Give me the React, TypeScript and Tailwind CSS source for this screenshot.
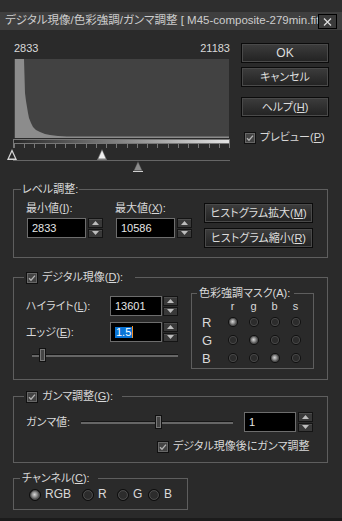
import React from "react";

function Check() {
  return (
    <span className="inline-flex w-[12px] h-[12px] shrink-0 items-center justify-center border border-[#111] bg-[#434343] shadow-[inset_0_0_0_1px_#676767]">
      <svg width="8" height="8" viewBox="0 0 8 8">
        <path d="M1 4.2 L3 6.2 L7 1.6" stroke="#b4b4b4" strokeWidth="1.3" fill="none" />
      </svg>
    </span>
  );
}

function Radio({ on, size = 12 }: { on?: boolean; size?: number }) {
  return (
    <svg width={size} height={size} viewBox="0 0 12 12" className="shrink-0 block">
      <defs>
        <radialGradient id="rdOn" cx="0.45" cy="0.45" r="0.6">
          <stop offset="0" stopColor="#d8d8d8" />
          <stop offset="0.5" stopColor="#8a8a8a" />
          <stop offset="1" stopColor="#3a3a3a" />
        </radialGradient>
      </defs>
      <circle cx="6" cy="6" r="5.5" fill="#262626" stroke="#0e0e0e" />
      <circle cx="6" cy="6" r="4.4" fill={on ? "url(#rdOn)" : "#2c2c2c"} stroke="#555" strokeWidth="0.8" />
    </svg>
  );
}

function Spin({ className = "" }: { className?: string }) {
  return (
    <div className={"flex flex-col w-[15px] h-[20px] gap-[1px] " + className}>
      <div className="flex-1 flex items-center justify-center border border-[#141414] bg-[#393939] shadow-[inset_0_1px_0_#4c4c4c]">
        <svg width="7" height="4" viewBox="0 0 7 4">
          <path d="M0 4 L3.5 0 L7 4Z" fill="#bdbdbd" />
        </svg>
      </div>
      <div className="flex-1 flex items-center justify-center border border-[#141414] bg-[#393939] shadow-[inset_0_1px_0_#4c4c4c]">
        <svg width="7" height="4" viewBox="0 0 7 4">
          <path d="M0 0 L3.5 4 L7 0Z" fill="#bdbdbd" />
        </svg>
      </div>
    </div>
  );
}

function Input({ className = "", children }: { className?: string; children?: React.ReactNode }) {
  return (
    <div
      className={
        "h-[20px] bg-black border border-[#6d6d6d] flex items-center pl-[4px] text-[11px] text-[#e6e6e6] " +
        className
      }
    >
      {children}
    </div>
  );
}

function Btn({ className = "", children }: { className?: string; children: React.ReactNode }) {
  return (
    <div
      className={
        "flex items-center justify-center whitespace-nowrap border border-[#0b0b0b] bg-linear-to-b from-[#3d3d3d] to-[#222] shadow-[inset_0_0_0_1px_#4a4a4a] text-[#dedede] " +
        className
      }
    >
      {children}
    </div>
  );
}

function Slider({ left, right, className = "" }: { left: number; right: number; className?: string }) {
  return (
    <div className={"flex items-center h-[14px] " + className}>
      <div className="h-[3px] border-t border-[#161616] bg-[#666]" style={{ width: left }} />
      <div className="w-[7px] h-[14px] border border-[#111] bg-[#444] shadow-[inset_0_0_0_1px_#777]" />
      <div className="h-[3px] border-t border-[#161616] bg-[#666]" style={{ width: right }} />
    </div>
  );
}

function Histogram() {
  const ticks = Array.from({ length: 22 }, (_, i) => Math.round(7 + i * 10.24) + 0.5);
  return (
    <svg width="225" height="116" viewBox="0 0 225 116" className="block mt-[2px]">
      <defs>
        <linearGradient id="hg" x1="0" x2="1" y1="0" y2="0">
          <stop offset="0" stopColor="#262626" />
          <stop offset="1" stopColor="#e4e4e4" />
        </linearGradient>
      </defs>
      <rect x="7" y="2" width="215" height="79" fill="#424242" />
      <polygon
        points="8,81 8,2 17,2 18,36 19,44 20,50 21,56 22,61 24,66 26,70 29,73 33,75 38,77 43,78 51,79 60,79.5 222,79.5 222,81"
        fill="#8c8c8c"
      />
      <rect x="6.5" y="82.5" width="216" height="4" fill="url(#hg)" stroke="#777" />
      <line x1="6.5" y1="82" x2="6.5" y2="91" stroke="#777" />
      <line x1="222.5" y1="82" x2="222.5" y2="91" stroke="#777" />
      {ticks.map((x) => (
        <line key={x} x1={x} y1="87" x2={x} y2="91" stroke="#777" />
      ))}
      <line x1="6" y1="103.5" x2="223" y2="103.5" stroke="#666" />
      <polygon points="5,92 0,103 10,103" fill="#d6d6d6" />
      <polygon points="5,95 2,101.5 8,101.5" fill="#2a2a2a" />
      <polygon points="95,92 90,103 100,103" fill="#7a7a7a" />
      <polygon points="95,93.5 91.5,101.5 98.5,101.5" fill="#efefef" />
      <polygon points="131,104 126,115 136,115" fill="#555" />
      <polygon points="131,105.5 127.5,113 134.5,113" fill="#8c8c8c" />
      <line x1="126" y1="114.5" x2="136" y2="114.5" stroke="#cfcfcf" />
    </svg>
  );
}

export default function App() {
  const dot = (on: boolean) => (
    <div className="flex items-center justify-center">
      <Radio on={on} size={10} />
    </div>
  );
  return (
    <div className="w-[342px] h-[521px] overflow-hidden bg-[#2a2a2a] text-[#d9d9d9] text-[11px] leading-[13px] font-['Liberation_Sans','Noto_Sans_CJK_JP',sans-serif] [font-feature-settings:'palt'] flex flex-col">
      <div className="h-[12px] bg-[#2e2e2e] shrink-0" />
      <div className="h-[18px] bg-[#3f3f3f] flex items-start shrink-0">
        <div className="flex-1 overflow-hidden whitespace-nowrap pl-[5px] pt-[1px] text-[11.5px] leading-[14px] text-[#cdcdcd]">
          デジタル現像/色彩強調/ガンマ調整 [ M45-composite-279min.fits ]
        </div>
        <div className="mt-[2px] mr-[5px] w-[19px] h-[15px] border border-black bg-[#3a3a3a] flex items-center justify-center">
          <svg width="9" height="8" viewBox="0 0 9 8">
            <path d="M1 0.5 L8 7.5 M8 0.5 L1 7.5" stroke="#dcdcdc" strokeWidth="1.3" />
          </svg>
        </div>
      </div>

      <div className="flex items-start shrink-0">
        <div className="ml-[7px] w-[225px]">
          <div className="mt-[11px] ml-[7px] w-[216px] flex justify-between text-[11px] leading-[14px]">
            <span>2833</span>
            <span>21183</span>
          </div>
          <Histogram />
        </div>
        <div className="ml-[9px] w-[88px] mt-[13px] flex flex-col">
          <Btn className="h-[20px] text-[12px]">OK</Btn>
          <Btn className="h-[20px] mt-[4px]">キャンセル</Btn>
          <Btn className="h-[20px] mt-[10px]">
            ヘルプ(<u>H</u>)
          </Btn>
          <div className="mt-[14px] ml-[3px] flex items-center gap-[4px] whitespace-nowrap">
            <Check />
            <span>
              プレビュー(<u>P</u>)
            </span>
          </div>
        </div>
      </div>

      <fieldset className="ml-[13px] w-[315px] mt-[10px] border border-[#5e5e5e] pb-[9px] shrink-0">
        <legend className="ml-[7px] px-[1px] leading-[13px]">レベル調整:</legend>
        <div className="flex items-start pl-[12px]">
          <div className="mt-[6px] flex flex-col">
            <span>
              最小値(<u>I</u>):
            </span>
            <div className="mt-[3px] flex">
              <Input className="ml-[1px] w-[59px]">2833</Input>
              <Spin className="ml-[2px]" />
            </div>
          </div>
          <div className="mt-[6px] ml-[12px] flex flex-col">
            <span>
              最大値(<u>X</u>):
            </span>
            <div className="mt-[3px] flex">
              <Input className="ml-[1px] w-[59px]">10586</Input>
              <Spin className="ml-[2px]" />
            </div>
          </div>
          <div className="mt-[7px] ml-[12px] w-[109px] flex flex-col">
            <Btn className="h-[20px]">
              ヒストグラム拡大(<u>M</u>)
            </Btn>
            <Btn className="h-[20px] mt-[5px]">
              ヒストグラム縮小(<u>R</u>)
            </Btn>
          </div>
        </div>
      </fieldset>

      <fieldset className="ml-[13px] w-[315px] mt-[13px] border border-[#5e5e5e] pb-[10px] shrink-0">
        <legend className="ml-[10px] pl-[2px] pr-[12px] leading-[13px]">
          <span className="inline-flex items-center gap-[4px] align-top">
            <Check />
            <span>
              デジタル現像(<u>D</u>):
            </span>
          </span>
        </legend>
        <div className="flex items-start pl-[12px]">
          <div className="flex flex-col">
            <div className="mt-[12px] flex items-center">
              <span className="w-[84px]">
                ハイライト(<u>L</u>):
              </span>
              <Input className="w-[52px]">13601</Input>
              <Spin className="ml-[1px]" />
            </div>
            <div className="mt-[6px] flex items-center">
              <span className="w-[84px]">
                エッジ(<u>E</u>):
              </span>
              <Input className="w-[52px]">
                <span className="bg-[#0a74d6] text-white leading-[11px] px-[1px]">1.5</span>
                <span className="w-[1px] h-[12px] bg-[#f0912a]" />
              </Input>
              <Spin className="ml-[1px]" />
            </div>
            <Slider className="mt-[6px] ml-[6px]" left={7} right={132} />
          </div>
          <fieldset className="ml-[13px] mt-[3px] w-[123px] border border-[#5e5e5e] pb-[1px]">
            <legend className="ml-[5px] pl-[2px] pr-[4px] leading-[13px] whitespace-nowrap">色彩強調マスク(A):</legend>
            <div className="grid grid-cols-[20px_21px_21px_21px_21px] pl-[10px]">
              <div className="h-[13px]" />
              {["r", "g", "b", "s"].map((c) => (
                <div key={c} className="h-[13px] text-center text-[11px] leading-[12px]">
                  {c}
                </div>
              ))}
              {["R", "G", "B"].map((r, ri) => (
                <React.Fragment key={r}>
                  <div className="h-[18px] flex items-center text-[13px]">{r}</div>
                  {[0, 1, 2, 3].map((ci) => (
                    <React.Fragment key={ci}>{dot(ci === ri)}</React.Fragment>
                  ))}
                </React.Fragment>
              ))}
            </div>
          </fieldset>
        </div>
      </fieldset>

      <fieldset className="ml-[13px] w-[315px] mt-[10px] border border-[#5e5e5e] pb-[9px] shrink-0">
        <legend className="ml-[10px] pl-[2px] pr-[9px] leading-[13px]">
          <span className="inline-flex items-center gap-[4px] align-top">
            <Check />
            <span>
              ガンマ調整(<u>G</u>):
            </span>
          </span>
        </legend>
        <div className="pl-[12px] flex flex-col">
          <div className="mt-[9px] flex items-center">
            <span className="w-[55px]">ガンマ値:</span>
            <Slider left={74} right={71} />
            <Input className="ml-[11px] w-[52px]">1</Input>
            <Spin className="ml-[2px]" />
          </div>
          <div className="mt-[8px] ml-[131px] flex items-center gap-[4px]">
            <Check />
            <span>デジタル現像後にガンマ調整</span>
          </div>
        </div>
      </fieldset>

      <fieldset className="ml-[13px] w-[175px] mt-[9px] border border-[#5e5e5e] pb-[8px] shrink-0">
        <legend className="ml-[6px] pl-[2px] pr-[8px] leading-[13px]">
          チャンネル(<u>C</u>):
        </legend>
        <div className="mt-[3px] pl-[15px] flex items-center text-[12px]">
          <div className="w-[53px] flex items-center gap-[4px]">
            <Radio on />
            <span>RGB</span>
          </div>
          <div className="w-[35px] flex items-center gap-[4px]">
            <Radio />
            <span>R</span>
          </div>
          <div className="w-[31px] flex items-center gap-[4px]">
            <Radio />
            <span>G</span>
          </div>
          <div className="flex items-center gap-[4px]">
            <Radio />
            <span>B</span>
          </div>
        </div>
      </fieldset>
      <div className="flex-1" />
      <div className="h-[3px] bg-[#1c1c1c] shrink-0" />
    </div>
  );
}
